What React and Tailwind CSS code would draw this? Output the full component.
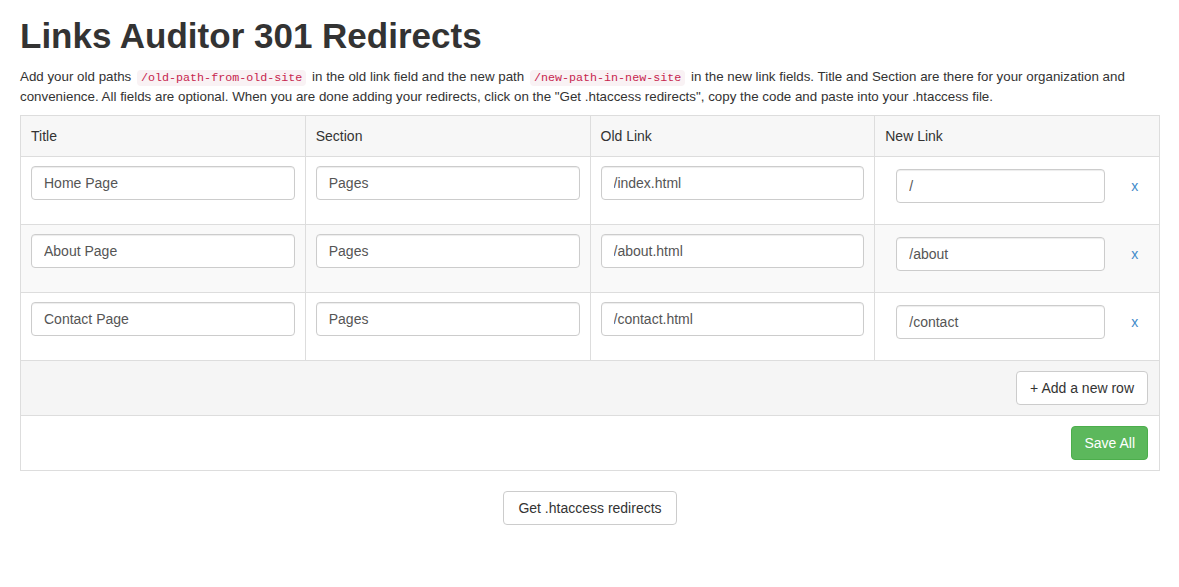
export default function App() {
  const rows = [
    { title: "Home Page", section: "Pages", oldLink: "/index.html", newLink: "/" },
    { title: "About Page", section: "Pages", oldLink: "/about.html", newLink: "/about" },
    { title: "Contact Page", section: "Pages", oldLink: "/contact.html", newLink: "/contact" },
  ];
  const font = { fontFamily: '"Liberation Sans", Arial, sans-serif' };
  const inputCls =
    "block w-full h-[34px] px-[12px] border border-[#ccc] rounded-[4px] bg-white text-[#555] text-[14px] shadow-[inset_0_1px_1px_rgba(0,0,0,0.075)] outline-none";
  const codeCls =
    "px-[4px] py-[1px] mx-[2px] rounded-[4px] bg-[#f9f2f4] text-[#c7254e] text-[11.7px] leading-[16px] font-['Liberation_Mono',monospace]";
  return (
    <div className="px-[20px] bg-white text-[#333] text-[13px] leading-[20px]" style={font}>
      <h1 className="mt-[16px] mb-[11px] text-[35px] leading-[40px] font-bold text-[#333]">
        Links Auditor 301 Redirects
      </h1>
      <p className="mb-[8px] text-[13.35px] leading-[20px]">
        Add your old paths{" "}
        <code className={codeCls}>/old-path-from-old-site</code>{" "}
        in the old link field and the new path{" "}
        <code className={codeCls}>/new-path-in-new-site</code>{" "}
        in the new link fields. Title and Section are there for your organization and convenience. All fields are optional. When you are done adding your redirects, click on the "Get .htaccess redirects", copy the code and paste into your .htaccess file.
      </p>
      <table className="w-[1140px] border-collapse border border-[#ddd] table-fixed">
        <thead>
          <tr className="bg-[#f7f7f7]">
            {["Title", "Section", "Old Link", "New Link"].map((h) => (
              <th key={h} className="w-1/4 border border-[#ddd] px-[10px] py-[10px] text-left font-normal text-[14px] leading-[20px]">
                {h}
              </th>
            ))}
          </tr>
        </thead>
        <tbody>
          {rows.map((r, i) => (
            <tr key={i} className={i % 2 === 1 ? "bg-[#f9f9f9]" : "bg-white"}>
              {[r.title, r.section, r.oldLink].map((v, j) => (
                <td key={j} className="border border-[#ddd] align-top px-[10px] pt-[9px] pb-[9px]">
                  <input className={inputCls + " mb-[15px]"} defaultValue={v} />
                </td>
              ))}
              <td className="border border-[#ddd] align-top pl-[21px] pr-[10px] pt-[12px] pb-[9px]">
                <div className="flex items-center mb-[12px]">
                  <input className={inputCls + " !w-[209px] shrink-0"} defaultValue={r.newLink} />
                  <a className="ml-[26px] text-[#428bca] text-[14px] leading-[20px] cursor-pointer">x</a>
                </div>
              </td>
            </tr>
          ))}
          <tr className="bg-[#f5f5f5]">
            <td colSpan={4} className="border border-[#ddd] px-[11px] pt-[10px] pb-[10px]">
              <div className="flex justify-end">
                <button className="h-[34px] px-[13px] border border-[#ccc] rounded-[4px] bg-white text-[#333] text-[14px]">
                  + Add a new row
                </button>
              </div>
            </td>
          </tr>
          <tr className="bg-white">
            <td colSpan={4} className="border border-[#ddd] px-[11px] pt-[10px] pb-[10px]">
              <div className="flex justify-end">
                <button className="h-[34px] px-[12px] border border-[#4cae4c] rounded-[4px] bg-[#5cb85c] text-white text-[14px]">
                  Save All
                </button>
              </div>
            </td>
          </tr>
        </tbody>
      </table>
      <div className="flex justify-center mt-[20px] w-[1140px]">
        <button className="h-[34px] px-[14px] border border-[#ccc] rounded-[4px] bg-white text-[#333] text-[14px]">
          Get .htaccess redirects
        </button>
      </div>
    </div>
  );
}
